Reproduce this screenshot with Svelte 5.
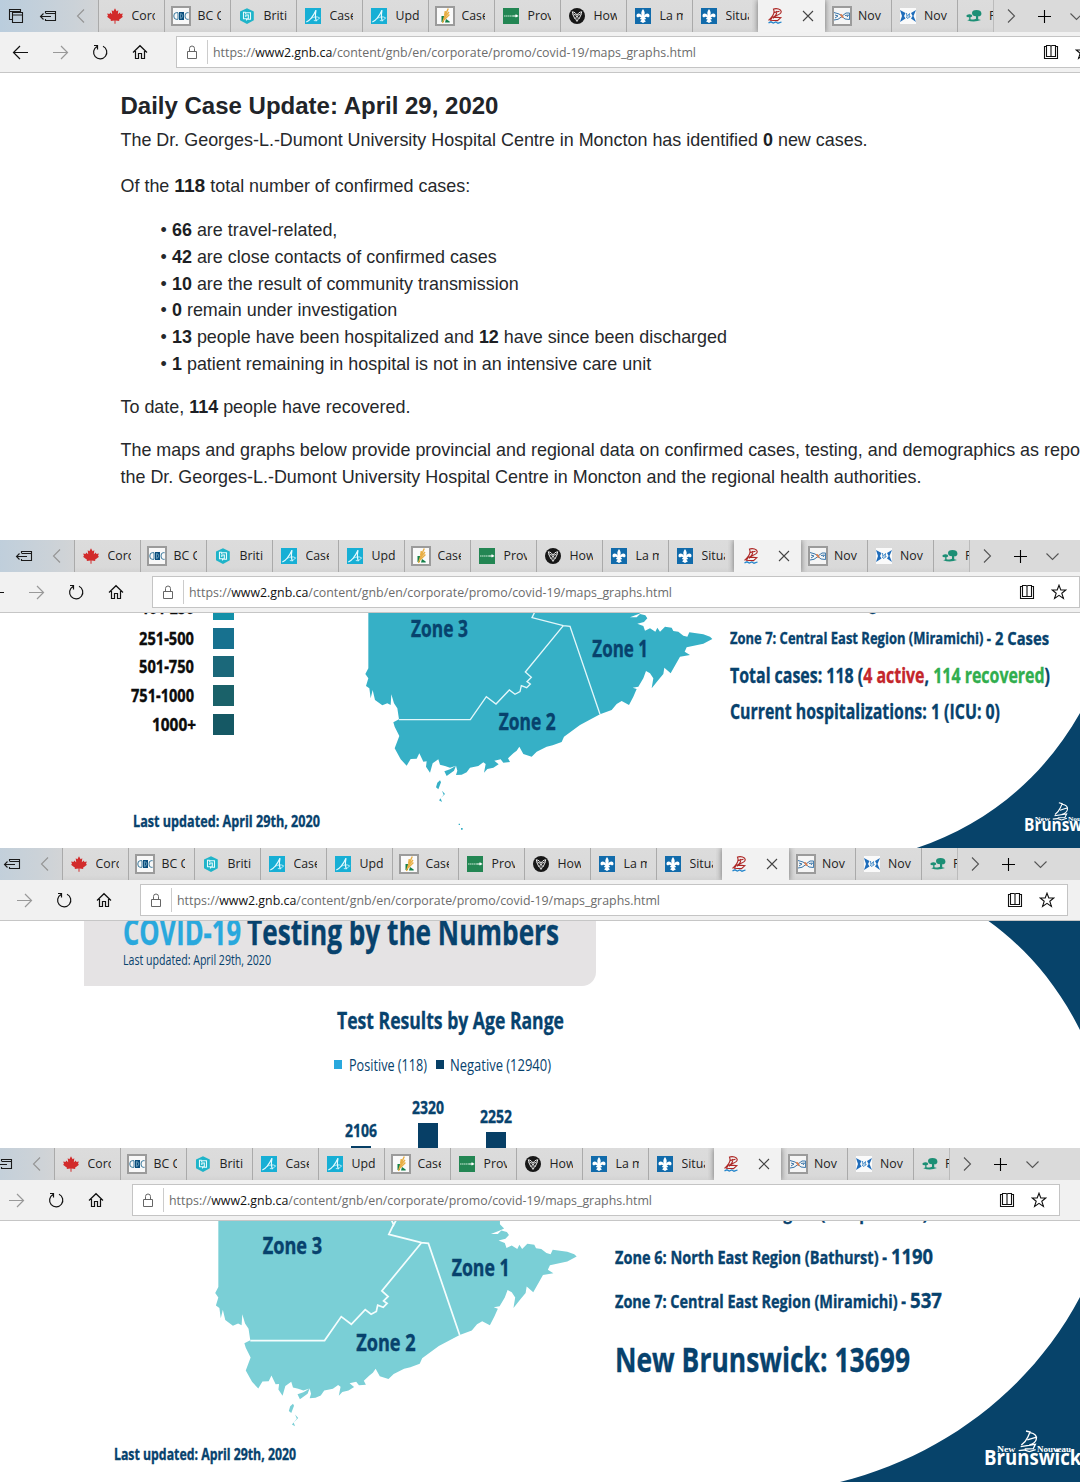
<script>
  const tabs = [
    { icon: 'maple', label: 'Corona' },
    { icon: 'bccdc', label: 'BC Ce' },
    { icon: 'hex', label: 'Briti' },
    { icon: 'alberta', label: 'Cases' },
    { icon: 'alberta', label: 'Upd' },
    { icon: 'sask', label: 'Cases' },
    { icon: 'manitoba', label: 'Provi' },
    { icon: 'ontario', label: 'How' },
    { icon: 'quebec', label: 'La ma' },
    { icon: 'quebec', label: 'Situat' },
    { icon: 'ship', label: '', active: true },
    { icon: 'nova', label: 'Nov' },
    { icon: 'nova2', label: 'Nov' },
    { icon: 'trees', label: 'P', short: true }
  ];
  const legend = [
    { label: '101-250', w: 53, color: '#1390a8' },
    { label: '251-500', w: 55, color: '#17718f' },
    { label: '501-750', w: 55, color: '#1b687a' },
    { label: '751-1000', w: 63, color: '#1a6169' },
    { label: '1000+', w: 44, color: '#155864', wide: true }
  ];
  const ages = [
    { n: '2106', h: 2 },
    { n: '2320', h: 25 },
    { n: '2252', h: 16 }
  ];
</script>

<!-- Condensed line of text: the bottom of the box is the baseline -->
{#snippet fit(parts, w, size, weight = 700)}
  <svg class="fit" class:heavy={weight === 700} width={w} height={size} font-size={size} font-weight={weight}>
    <text x="0" y={size} textLength={w} lengthAdjust="spacingAndGlyphs">{#each parts as p}<tspan class={p[1]}>{p[0]}</tspan>{/each}</text>
  </svg>
{/snippet}

{#snippet favicon(kind)}
  <svg class="favicon" class:framed={kind === 'bccdc' || kind === 'sask' || kind === 'nova'} viewBox="0 0 16 16">
    {#if kind === 'maple'}
      <path fill="#d22b2b" d="M8 0.3 9.6 3.2 11.3 2.3 10.8 6.3 12.9 4.6 13.4 5.9 15.8 5.5 15 8 16 8.7 12 11.8 12.3 13 8.5 12.5V15.8H7.5V12.5L3.7 13 4 11.8 0 8.7 1 8 .2 5.5 2.6 5.9 3.1 4.6 5.2 6.3 4.7 2.3 6.4 3.2Z" />
    {:else if kind === 'bccdc'}
      <rect width="16" height="16" fill="#f8f8f8" />
      <rect x="6" y="4" width="5" height="8" fill="#0a4d7c" />
      <path d="M5 4.7H3.2Q.8 4.7.8 8T3.2 11.3H5M15.6 4.7H14.2Q12 4.7 12 8T14.2 11.3H15.6M5 4.7V11.3" fill="none" stroke="#236a92" stroke-width=".9" />
      <path d="M7.5 5.5V10.5M7.5 5.5Q10 6 9.8 8T7.5 10.5" fill="none" stroke="#79abc5" stroke-width=".8" />
    {:else if kind === 'hex'}
      <path d="M8 .2 14.8 3.5V12.3L8 15.9 1 12.3V3.5Z" fill="#1fb4c9" />
      <path d="M6.7 4.3H4.5V10.8H9.3V7H6.8V9M6.7 4.3V6M6.8 4.8H11.5V11.2H7.5V12.5" fill="none" stroke="#e8fbfd" stroke-width="1.1" />
    {:else if kind === 'alberta'}
      <rect width="16" height="16" fill="#17afd5" />
      <path d="M1.3 14C5 12.5 8.5 7.5 11 2.2 10.3 6 10.2 10.5 11.4 13.3" fill="none" stroke="#e7fbff" stroke-width="1.2" />
      <path d="M5.8 10.5C9 8.6 12 8.3 14.6 9.8 13.6 11.7 11 13 8.8 12.6" fill="none" stroke="#d8f6fc" stroke-width=".8" />
    {:else if kind === 'sask'}
      <rect width="16" height="16" fill="#fafafa" />
      <path d="M4.5 8H7V14H4.5Z M9 11 12.7 13.5V14.5H8Z" fill="#13804a" />
      <path d="M11.3 0.5 7.5 8.7 5.5 15M12 4 7 10M8.3 3 7.6 7.6M12.4 6.5 7 12" fill="none" stroke="#e8ae43" stroke-width="1.4" />
    {:else if kind === 'manitoba'}
      <rect width="16" height="16" fill="#238653" />
      <path d="M1 8H10" stroke="#c9e8d5" stroke-width="1.2" stroke-dasharray="1.5 .4" />
      <path d="M10 8H15M12.5 6.8 14.5 8 12.5 9" fill="none" stroke="#fff" stroke-width="1.1" />
    {:else if kind === 'ontario'}
      <circle cx="8" cy="8" r="8" fill="#171717" />
      <path d="M7.6 7.2C5.6 7.3 3.8 6 3.2 3.8 5.4 4 7.2 5.2 7.6 7.2ZM8.4 7.2C10.4 7.3 12.2 6 12.8 3.8 10.6 4 8.8 5.2 8.4 7.2ZM8 8C6.4 9.5 6.4 11.7 8 13.4 9.6 11.7 9.6 9.5 8 8ZM3.4 5.5 6 11M12.6 5.5 10 11" fill="none" stroke="#fff" stroke-width=".9" />
    {:else if kind === 'quebec'}
      <rect width="16" height="16" fill="#116bab" />
      <path d="M8 1Q10.8 4.2 9 8.2C10 5 14.5 4.7 14.5 7.7 14.5 9.5 12.6 9.8 12 8.7 10.8 8.4 9.8 9.4 9.6 10.1H10.8V11.3H9.4Q9.7 13 11 13.3L8 15 5 13.3Q6.3 13 6.6 11.3H5.2V10.1H6.4C6.2 9.4 5.2 8.4 4 8.7 3.4 9.8 1.5 9.5 1.5 7.7 1.5 4.7 6 5 7 8.2Q5.2 4.2 8 1Z" fill="#fff" />
    {:else if kind === 'ship'}
      <path d="M6 1.2C9.5-.2 14.6 1 14.2 4 13.8 6.5 10 7.3 6.8 8.6M6.3 1.2C8.2 4 6.2 8 1.5 12.3M9 3C10.5 5 9 7.5 6 10.3M5.5 8.8 13.8 9.6 10.5 12.6 3.5 12.2ZM6.8 4.6 12.5 3.2" fill="none" stroke="#ad2624" stroke-width="1.1" />
      <path d="M1.5 14.8 4 13.8 6.3 15 8.8 14 11 15.2 14.5 14" fill="none" stroke="#2486cc" stroke-width="1.3" />
    {:else if kind === 'nova'}
      <rect width="16" height="16" fill="#f5f5f5" />
      <path d="M0 4.5 5 6 8 8 12 5 15.6 5V11.5L11 11 8 8.5 4 11.3 0 12M1 7 4 8 1 10M11 7.5 14.5 7 13 9" fill="none" stroke="#3976aa" stroke-width="1" />
      <path d="M5.5 6 8 6.3 10 9.5 8 10Z" fill="#db7f50" />
    {:else if kind === 'nova2'}
      <rect width="16" height="16" fill="#fafafa" />
      <path d="M0 2 5.5 5 4 8 5.5 10.5 0 14 2 8ZM16 2 11 5 12.6 8 11 10.5 16 14 13.5 8Z" fill="#1f6dbb" />
      <path d="M6.5 5 7 8.5 9.5 5.5 9 9.5M6 9 8 10.5 10.5 8" fill="none" stroke="#438bc9" stroke-width="1" />
    {:else}
      <path d="M6 5Q6 2.1 10.5 2.1T15.4 5.2 12.2 8.3V11.2L15 12Q8 14.8 1.2 12.2L3.2 11.4V9.3Q.2 9.4.3 7.8 1 6 3.6 6.2 6.3 6.3 6.2 8.4L4.5 9.2V11.2Q8 12 10 10.8V8.3Q6.2 8.2 6 5Z" fill="#1c8f75" />
    {/if}
  </svg>
{/snippet}

{#snippet chrome(shift)}
  <div class="chrome" style:margin-left="{-shift}px">
    <div class="strip">
      <div class="system">
        <svg class="ic" viewBox="0 0 32 32"><path d="M12.5 19.5H9.5V9.5H20.5V12M9.5 11.5H20.5M12.5 12.5H22.5V22.5H12.5ZM12.5 15H22.5" /></svg>
        <svg class="ic" viewBox="0 0 32 32"><path d="M13.5 13V11.5H23.5V20.5H13.5V19M13.5 13.5H23.5M8.5 16.5H19M11.5 13.5 8.5 16.5 11.5 19.5" /></svg>
        <svg class="ic faint" viewBox="0 0 32 32"><path d="M20 9.5 13.5 16 20 22.5" /></svg>
      </div>
      {#each tabs as tab}
        <div class="tab" class:active={tab.active} class:short={tab.short}>
          {@render favicon(tab.icon)}
          {#if tab.active}
            <svg class="close" viewBox="0 0 12 12"><path d="M1 1 11 11M11 1 1 11" /></svg>
          {:else}
            <span class="label">{tab.label}</span>
          {/if}
        </div>
      {/each}
      <div class="tail">
        <svg class="ic" viewBox="0 0 32 32"><path d="M13 9.5 19.5 16 13 22.5" class="grey" /></svg>
        <svg class="ic dark" viewBox="0 0 32 32"><path d="M10 16.5H23M16.5 10V23" /></svg>
        <svg class="ic" viewBox="0 0 32 32"><path d="M9.5 13.5 15.5 19.5 21.5 13.5" class="grey" /></svg>
      </div>
    </div>
    <div class="toolbar">
      <svg class="nav" viewBox="0 0 40 40"><path d="M13.5 20.5H28M20 14 13.5 20.5 20 27" /></svg>
      <svg class="nav faint" viewBox="0 0 40 40"><path d="M13 20.5H27.5M21 14 27.5 20.5 21 27" /></svg>
      <svg class="nav" viewBox="0 0 40 40"><path d="M17 14.5A6.6 6.6 0 1 0 23 14.3M14 13.5H17.5V17.5" /></svg>
      <svg class="nav" viewBox="0 0 40 40"><path d="M13 20.5 20 13.7 27 20.5M15.5 19V26.5H18.5V21.5H21.5V26.5H24.5V19" /></svg>
      <div class="address">
        <svg class="lock" viewBox="0 0 12 14"><path d="M1.5 6.5H10.5V13.5H1.5ZM3.5 6.5V3.5Q3.5 1 6 1T8.5 3.5V6.5" /></svg>
        <div class="url">
          {@render fit([['https://', ''], ['www2.gnb.ca', 'host'], ['/content/gnb/en/corporate/promo/covid-19/maps_graphs.html', '']], 483, 13.5, 400)}
        </div>
        <svg class="book" viewBox="0 0 16 16"><path d="M3.5 1.5H7Q8 1.5 8 2.5V13Q8 12.5 7 12.5H3.5ZM12.5 1.5H9Q8 1.5 8 2.5V13Q8 12.5 9 12.5H12.5ZM3.5 2.5H1.5V14.5H14.5V2.5H12.5" /></svg>
        <svg class="star" viewBox="0 0 16 16"><path d="M8 1.2 9.8 6H14.8L10.8 9.2 12.4 14.4 8 11.3 3.6 14.4 5.2 9.2 1.2 6H6.2Z" /></svg>
      </div>
    </div>
  </div>
{/snippet}

{#snippet map(cls, viewBox, zone2)}
  <svg class="map {cls}" {viewBox} preserveAspectRatio="none">
    <path class="land" d="M55 10V205L46 222 55 235 48 258 58 265 62 295 68 270 75 300 97 316 112 310 122 315 124 283 132 310 142 325 147 358 130 367 134 380 148 408 134 445 152 478 170 497 182 477 200 476 208 460 220 485 230 484 228 500 240 518 248 490 265 478 270 494 285 498 300 503 318 497 312 512 290 528 283 514 300 508 318 497 322 512 318 525 335 524 350 517 360 503 385 498 400 487 407 492 402 518 412 507 430 503 446 493 433 482 452 478 460 488 480 486 474 475 490 460 500 452 508 440 520 462 545 470 560 455 590 440 608 436 635 426 642 410 690 375 750 343 785 330 800 312 815 303 837 315 850 290 860 267 848 263 865 260 880 235 888 213 900 220 910 235 905 265 925 240 940 222 943 203 962 220 990 170 1020 165 1004 155 1010 142 1060 131 1087 117 1080 110 1060 103 1018 97 1012 110 1000 107 985 95 970 93 965 83 945 80 930 95 922 83 916 95 900 85 885 92 880 78 862 71 882 66 892 55 886 46 870 42 860 52 840 52 866 42 878 36 866 24V10Z" />
    <path class="land" d="M270 541 273 547 265 568 258 562 262 548ZM276 572 285 582 272 595 276 606 267 601 281 584ZM326 671H330V675H326ZM333 684H338V689H333Z" />
    <path class="border" d="M147 359H361L409 290 438 312 478 270 495 283 510 275 514 257 530 263 541 252 531 245 544 232 526 216 640 77M553 10 560 26 568 10M562 20 546 53 640 77 660 79 750 343" />
    <text x="183" y="111" textLength="171" lengthAdjust="spacingAndGlyphs">Zone 3</text>
    <text x="727" y="172" textLength="167" lengthAdjust="spacingAndGlyphs">Zone 1</text>
    <text x={zone2} y="389" textLength="171" lengthAdjust="spacingAndGlyphs">Zone 2</text>
  </svg>
{/snippet}

{#snippet logo(cls)}
  <svg class="logo {cls}" viewBox="0 0 300 115">
    <text class="word" x="0" y="104" textLength="292" lengthAdjust="spacingAndGlyphs">Brunswick</text>
    <text class="mini" x="39" y="67" textLength="55" lengthAdjust="spacingAndGlyphs">New</text>
    <text class="mini" x="159" y="67" textLength="102" lengthAdjust="spacingAndGlyphs">Nouveau</text>
    <path d="M126 3 138 6 132 20Q126 34 112 45M138 8Q160 12 157 27 155 40 136 45M130 30 155 22M110 50 154 43 148 56 122 57M104 62 120 60 136 65 155 59" />
  </svg>
{/snippet}

<main>
  <section class="pane one">
    {@render chrome(0)}
    <article>
      <h1>Daily Case Update: April 29, 2020</h1>
      <p class="lead">The Dr. Georges-L.-Dumont University Hospital Centre in Moncton has identified <b>0</b> new cases.</p>
      <p class="total">Of the <b>118</b> total number of confirmed cases:</p>
      <ul>
        <li><b>66</b> are travel-related,</li>
        <li><b>42</b> are close contacts of confirmed cases</li>
        <li><b>10</b> are the result of community transmission</li>
        <li><b>0</b> remain under investigation</li>
        <li><b>13</b> people have been hospitalized and <b>12</b> have since been discharged</li>
        <li><b>1</b> patient remaining in hospital is not in an intensive care unit</li>
      </ul>
      <p class="recovered">To date, <b>114</b> people have recovered.</p>
      <p class="about">The maps and graphs below provide provincial and regional data on confirmed cases, testing, and demographics as repo<br />the Dr. Georges-L.-Dumont University Hospital Centre in Moncton and the regional health authorities.</p>
    </article>
  </section>

  <section class="pane two">
    {@render chrome(24)}
    <div class="board">
      <svg class="curve" viewBox="0 613 1080 235"><path d="M916.7 848C985 825 1042 780 1080 713V848Z" /></svg>
      <div class="side">
        <div class="legend">
          {#each legend as row}
            <div class="key" class:wide={row.wide}>
              {@render fit([[row.label, '']], row.w, 17)}
              <i style:background={row.color}></i>
            </div>
          {/each}
        </div>
        <div class="updated">{@render fit([['Last updated: April 29th, 2020', '']], 187, 16.5)}</div>
      </div>
      {@render map('cases', '0 39 1110 705', 446)}
      <div class="facts">
        {@render fit([['Zone 6: North East Region (Bathurst) - 0 Cases', '']], 296, 16)}
        <div class="pair">
          {@render fit([['Zone 7: Central East Region (Miramichi) -', '']], 261, 15.8)}
          {@render fit([['2 Cases', '']], 54, 18.5)}
        </div>
        {@render fit([['Total cases: 118 (', ''], ['4 active', 'red'], [', ', ''], ['114 recovered', 'green'], [')', '']], 320, 20.5)}
        {@render fit([['Current hospitalizations: 1 (ICU: 0)', '']], 270, 20.5)}
      </div>
      {@render logo('small')}
    </div>
  </section>

  <section class="pane three">
    {@render chrome(36)}
    <div class="board">
      <svg class="curve" viewBox="0 921 1080 227">
        <path d="M988.5 921C1022 945 1055 980 1080 1030V921Z" />
        <text x="1016" y="920.8">Brunswick</text>
      </svg>
      <div class="banner">
        <div class="pair">
          {@render fit([['COVID-19', 'sky']], 118, 35)}
          {@render fit([['Testing by the Numbers', '']], 312, 35)}
        </div>
        {@render fit([['Last updated: April 29th, 2020', '']], 148, 14, 500)}
      </div>
      <div class="chart">
        {@render fit([['Test Results by Age Range', '']], 227, 23)}
        <div class="series">
          <i class="pos"></i>{@render fit([['Positive (118)', '']], 78, 16, 500)}
          <i class="neg"></i>{@render fit([['Negative (12940)', '']], 101, 16, 500)}
        </div>
        <div class="bars">
          {#each ages as a}
            <div class="bar">
              {@render fit([[a.n, '']], 32, 17.5)}
              <i style:height="{a.h}px"></i>
            </div>
          {/each}
        </div>
      </div>
    </div>
  </section>

  <section class="pane four">
    {@render chrome(44)}
    <div class="board">
      <svg class="curve" viewBox="0 1221 1080 261"><path d="M840 1482C940 1457 1030 1392 1080 1297V1482Z" /></svg>
      <div class="updated">{@render fit([['Last updated: April 29th, 2020', '']], 182, 16)}</div>
      {@render map('tests', '2.2 14.5 1152 631', 452)}
      <div class="facts">
        {@render fit([['Zone 5: North West Region (Campbellton) - 345', '']], 352, 17)}
        <div class="pair">
          {@render fit([['Zone 6: North East Region (Bathurst) -', '']], 272, 17)}
          {@render fit([['1190', '']], 42, 21)}
        </div>
        <div class="pair">
          {@render fit([['Zone 7: Central East Region (Miramichi) -', '']], 291, 17)}
          {@render fit([['537', '']], 32, 21)}
        </div>
        {@render fit([['New Brunswick: 13699', '']], 295, 34)}
      </div>
      {@render logo('large')}
    </div>
  </section>
</main>

<style>
  :global(body) { margin: 0; background: #fff; }
  main { width: 1080px; height: 1484px; overflow: hidden; font-family: 'Open Sans', 'Noto Sans', sans-serif; }
  svg { display: block; flex: none; }
  i { display: block; flex: none; }
  .pane { display: flex; flex-direction: column; overflow: hidden; }
  .one { height: 540px; }
  .two { height: 308px; }
  .three { height: 300px; }
  .four { height: 334px; }

  .fit { overflow: visible; fill: #07426d; }
  .fit .red { fill: #c4262b; stroke: #c4262b; }
  .fit .green { fill: #31ae4e; stroke: #31ae4e; }
  .fit .sky { fill: #29a8dd; stroke: #29a8dd; }
  .heavy { stroke: #07426d; stroke-width: 0.35; }

  /* browser window frame */
  .chrome { width: 1170px; height: 73px; flex: none; }
  .strip { display: flex; height: 32px; background: #dadada; }
  .system { box-sizing: border-box; width: 98px; display: flex; background: linear-gradient(90deg, #bacddd, #cbd2d8 75%, #d2d4d6); }
  .ic { width: 32px; height: 32px; fill: none; stroke: #1a1a1a; stroke-width: 1.1; }
  .ic.faint { stroke: #949494; }
  .ic.dark { stroke: #000; stroke-width: 1.1; }
  .ic .grey { stroke: #555; }
  .tab { box-sizing: border-box; width: 66px; height: 32px; display: flex; align-items: center; padding-left: 8px; border-left: 1px solid #aaa; background: linear-gradient(#dcdcdc, #d9d9d9 85%, #d2d2d2); }
  .tab.active { width: 67px; padding-left: 9px; background: #f2f2f2; border: 0; box-shadow: 0 0 6px rgba(0, 0, 0, 0.5); position: relative; clip-path: inset(0 -6px 0 -6px); }
  .tab.active + .tab { border-left: 0; width: 65.5px; padding-left: 8.5px; }
  .tab.short { width: 37px; border-right: 1px solid #bbb; }
  .favicon { width: 16px; height: 16px; flex: none; }
  .favicon.framed { border: 2px solid #9b9b9b; margin: 0 -2px; }
  .label { margin-left: 8.5px; width: 23.5px; overflow: hidden; white-space: nowrap; font-size: 12.3px; line-height: 18px; color: #222; margin-top: -1px; }
  .short .label { margin-left: 7.5px; width: 4.5px; }
  .close { width: 12px; height: 12px; margin-left: 19px; fill: none; stroke: #444; stroke-width: 1.1; }
  .tail { display: flex; gap: 1px; margin-left: 1px; }
  .toolbar { box-sizing: border-box; display: flex; height: 41px; background: #f1f1f1; border-bottom: 1px solid #c6c6c6; }
  .nav { width: 40px; height: 40px; fill: none; stroke: #111; stroke-width: 1.2; }
  .nav.faint { stroke: #999; }
  .address { box-sizing: border-box; width: 928px; height: 32px; margin: 4px 0 0 16px; padding-left: 9px; display: flex; align-items: center; background: #fff; border: 1px solid #c4c4c4; }
  .lock { width: 12px; height: 14px; fill: none; stroke: #666; stroke-width: 1; }
  .url { height: 24px; margin-left: 9px; padding-left: 5px; border-left: 1px solid #ccc; width: 829px; }
  .url .fit { fill: #6c6c6c; margin-top: 3px; }
  .url .host { fill: #111; }
  .book { width: 16px; height: 16px; margin-left: 0.5px; fill: none; stroke: #111; stroke-width: 1.1; }
  .star { width: 16px; height: 16px; margin-left: 16.5px; fill: none; stroke: #111; stroke-width: 1.1; }

  /* case update page */
  article { padding: 18px 0 0 120.5px; font-family: 'Liberation Sans', Arial, sans-serif; font-size: 17.93px; line-height: 26.8px; color: #26282b; white-space: nowrap; }
  article b { color: #1d1f24; }
  h1 { margin: 0; font-size: 24px; line-height: 30px; color: #212429; }
  p { margin: 0; }
  .lead { margin-top: 6px; }
  .total { margin-top: 19px; }
  .total b { font-size: 19.2px; line-height: 20px; }
  ul { list-style: none; margin: 17.5px 0 0; padding: 0 0 0 40px; }
  li::before { content: '•'; margin-right: 5.2px; }
  .recovered, .about { margin-top: 16.2px; }

  /* infographics */
  .board { position: relative; flex: 1; display: flex; align-items: flex-start; overflow: hidden; }
  .curve { position: absolute; inset: 0; width: 100%; height: 100%; fill: #07436a; }
  .curve text { fill: #e5eef4; font: 700 17px 'Open Sans', sans-serif; }
  .side { width: 350px; height: 100%; }
  .legend { display: grid; grid-template-rows: repeat(5, 21px); row-gap: 7.7px; margin-top: -14px; }
  .legend .fit { fill: #0c0c0c; stroke: #0c0c0c; margin-bottom: 4px; }
  .key { width: 234px; display: flex; justify-content: flex-end; align-items: flex-end; gap: 18.3px; }
  .key.wide { gap: 17px; }
  .key:first-child .fit { margin-bottom: 5.8px; }
  .key i { width: 21.5px; height: 21px; }
  .two .updated { margin: 74.8px 0 0 133px; }
  .pair { display: flex; align-items: flex-end; }
  .map { position: relative; overflow: hidden; }
  .land { fill: #36b0c6; }
  .border { fill: none; stroke: #e3f7fa; stroke-width: 4; }
  .map text { fill: #07426d; stroke: #07426d; stroke-width: 1.2; font-size: 67px; font-weight: 700; }
  .cases { width: 370px; height: 235px; }
  .tests { width: 400px; height: 219px; }
  .tests .land { fill: #7acfd6; }
  .tests .border { stroke: #f4fdfd; stroke-width: 5; }
  .facts { position: relative; display: grid; align-items: end; }
  .two .facts { margin: -3.5px 0 0 10px; grid-template-rows: 0 34.5px 38.7px 35.8px; }
  .two .pair { gap: 4px; }
  .logo { position: absolute; fill: #fff; overflow: visible; font-family: 'Open Sans', sans-serif; }
  .logo path { fill: none; stroke: #fff; stroke-width: 4; }
  .logo .word { font-size: 62px; font-weight: 700; }
  .logo .mini { font-family: 'Liberation Serif', serif; font-weight: 700; font-size: 25px; }
  .small { width: 83px; height: 31.8px; left: 1024px; bottom: 14px; }
  .large { width: 100px; height: 38.3px; left: 984px; bottom: 14px; }

  .banner { box-sizing: border-box; position: relative; width: 512px; height: 64.5px; margin-left: 84px; padding-left: 39px; background: #e5e3e4; border-radius: 0 0 14px 0; }
  .banner .pair { gap: 6px; margin: -11px 0 5.5px; }
  .three .board { flex-direction: column; }
  .chart { width: 227px; margin: 20.5px 0 0 336.5px; }
  .series { display: flex; align-items: flex-end; margin: 25.5px 0 0 -2.5px; }
  .series i { width: 8px; height: 9px; margin: 0 6.5px 2px 0; }
  .series .neg { margin-left: 9px; margin-right: 6px; }
  .pos { background: #29a8dd; }
  .neg, .bar i { background: #073f66; }
  .bars { display: flex; align-items: flex-end; gap: 35.3px; height: 77px; margin-left: 8.5px; }
  .bar { display: flex; flex-direction: column; align-items: center; gap: 9px; }
  .bar i { width: 20px; }

  .four .updated { width: 86px; padding: 222.5px 0 0 114px; }
  .four .facts { margin: -1px 0 0 15px; grid-template-rows: 0 44.3px 43.4px 64.6px; }
  .four .pair { gap: 4px; }
</style>
